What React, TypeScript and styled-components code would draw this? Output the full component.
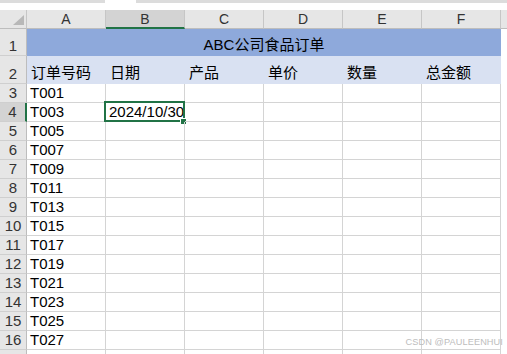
import React from 'react';
import styled, { createGlobalStyle } from 'styled-components';

const GlobalStyle = createGlobalStyle`
  html, body {
    margin: 0;
    padding: 0;
    background: #fff;
    overflow: hidden;
  }
  body {
    font-family: "Liberation Sans", "Noto Sans CJK SC", sans-serif;
  }
`;

const cols = ['A', 'B', 'C', 'D', 'E', 'F'];
const headers = ['订单号码', '日期', '产品', '单价', '数量', '总金额'];
const orders = ['T001', 'T003', 'T005', 'T007', 'T009', 'T011', 'T013', 'T015', 'T017', 'T019', 'T021', 'T023', 'T025', 'T027', ''];

const Page = styled.div`
  position: relative;
  width: 507px;
  height: 354px;
  overflow: hidden;
  background: #fff;
`;

const TopStrip = styled.div`
  height: 10px;
  display: flex;
  align-items: flex-start;
`;

const StripPiece = styled.div<{ $w: string }>`
  height: 3px;
  width: ${p => p.$w};
  background: #dcdcdc;
`;

const StripGap = styled.div`
  width: 31px;
`;

const Sheet = styled.div`
  display: grid;
  grid-template-columns: 27px repeat(6, 79px) 1fr;
  grid-template-rows: 19px 27px 28px repeat(15, 19px);
  font-size: 15px;
  color: #000;
`;

const Corner = styled.div`
  position: relative;
  background: #e6e6e6;
  border-right: 1px solid #c6c6c6;
  border-bottom: 1px solid #bdbdbd;
  box-sizing: border-box;
  svg {
    position: absolute;
    right: 2px;
    bottom: 3px;
  }
`;

const ColHead = styled.div<{ $active?: boolean }>`
  box-sizing: border-box;
  background: ${p => (p.$active ? '#d3d3d3' : '#e6e6e6')};
  border-right: 1px solid #c6c6c6;
  border-bottom: ${p => (p.$active ? '2px solid #217346' : '1px solid #bdbdbd')};
  display: flex;
  align-items: center;
  justify-content: center;
  font-size: 14px;
  color: #333;
  padding-top: ${p => (p.$active ? '1px' : '0')};
`;

const RowHead = styled.div<{ $active?: boolean }>`
  box-sizing: border-box;
  background: ${p => (p.$active ? '#d3d3d3' : '#e6e6e6')};
  border-right: ${p => (p.$active ? '2px solid #217346' : '1px solid #bdbdbd')};
  border-bottom: 1px solid #cfcfcf;
  display: flex;
  align-items: flex-end;
  justify-content: center;
  padding-bottom: 2px;
  font-size: 15px;
  color: #333;
  line-height: 1;
`;

const TitleCell = styled.div`
  grid-column: 2 / span 6;
  background: #8ea9db;
  display: flex;
  align-items: center;
  justify-content: center;
  padding-top: 1px;
  font-size: 15px;
`;

const HeadCell = styled.div`
  background: #d9e1f2;
  display: flex;
  align-items: flex-end;
  padding: 0 0 4px 4px;
  font-size: 15px;
  line-height: 1;
`;

const Cell = styled.div`
  position: relative;
  box-sizing: border-box;
  border-right: 1px solid #d4d4d4;
  border-bottom: 1px solid #d4d4d4;
  display: flex;
  align-items: flex-end;
  padding: 0 0 2px 3px;
  line-height: 1;
  white-space: nowrap;
`;

const Filler = styled.div<{ $head?: boolean }>`
  background: ${p => (p.$head ? '#e6e6e6' : '#fff')};
  border-bottom: ${p => (p.$head ? '1px solid #bdbdbd' : 'none')};
  box-sizing: border-box;
`;

const Selection = styled.div`
  position: absolute;
  left: -2px;
  top: -2px;
  right: -1px;
  bottom: -1px;
  border: 2px solid #217346;
  pointer-events: none;
`;

const Handle = styled.div`
  position: absolute;
  right: -3px;
  bottom: -4px;
  width: 5px;
  height: 5px;
  background: #217346;
  border-left: 1px solid #fff;
  border-top: 1px solid #fff;
`;

const Caret = styled.span`
  display: inline-block;
  width: 1px;
  height: 14px;
  background: #000;
`;

const Watermark = styled.div`
  position: absolute;
  right: 4px;
  bottom: 7px;
  font-size: 9.2px;
  color: #bdbdbd;
  letter-spacing: 0.1px;
`;

export default function App() {
  return (
    <Page>
      <GlobalStyle />
      <TopStrip>
        <StripPiece $w="105px" />
        <StripGap />
        <StripPiece $w="371px" />
      </TopStrip>
      <Sheet>
        <Corner>
          <svg width="11" height="10" viewBox="0 0 11 10">
            <polygon points="11,0 11,10 0,10" fill="#b8b8b8" />
          </svg>
        </Corner>
        {cols.map(c => (
          <ColHead key={c} $active={c === 'B'}>{c}</ColHead>
        ))}
        <Filler $head />

        <RowHead>1</RowHead>
        <TitleCell>ABC公司食品订单</TitleCell>
        <Filler />

        <RowHead>2</RowHead>
        {headers.map(h => (
          <HeadCell key={h}>{h}</HeadCell>
        ))}
        <Filler />

        {orders.map((id, i) => {
          const row = i + 3;
          // row 17 is only a sliver at the bottom edge, its number is below the fold
          return (
            <React.Fragment key={row}>
              <RowHead $active={row === 4}>{row < 17 ? row : ''}</RowHead>
              <Cell>{id}</Cell>
              {row === 4 ? (
                <Cell>
                  2024/10/30
                  <Caret />
                  <Selection>
                    <Handle />
                  </Selection>
                </Cell>
              ) : (
                <Cell />
              )}
              <Cell />
              <Cell />
              <Cell />
              <Cell />
              <Filler />
            </React.Fragment>
          );
        })}
      </Sheet>
      <Watermark>CSDN @PAULEENHUI</Watermark>
    </Page>
  );
}
